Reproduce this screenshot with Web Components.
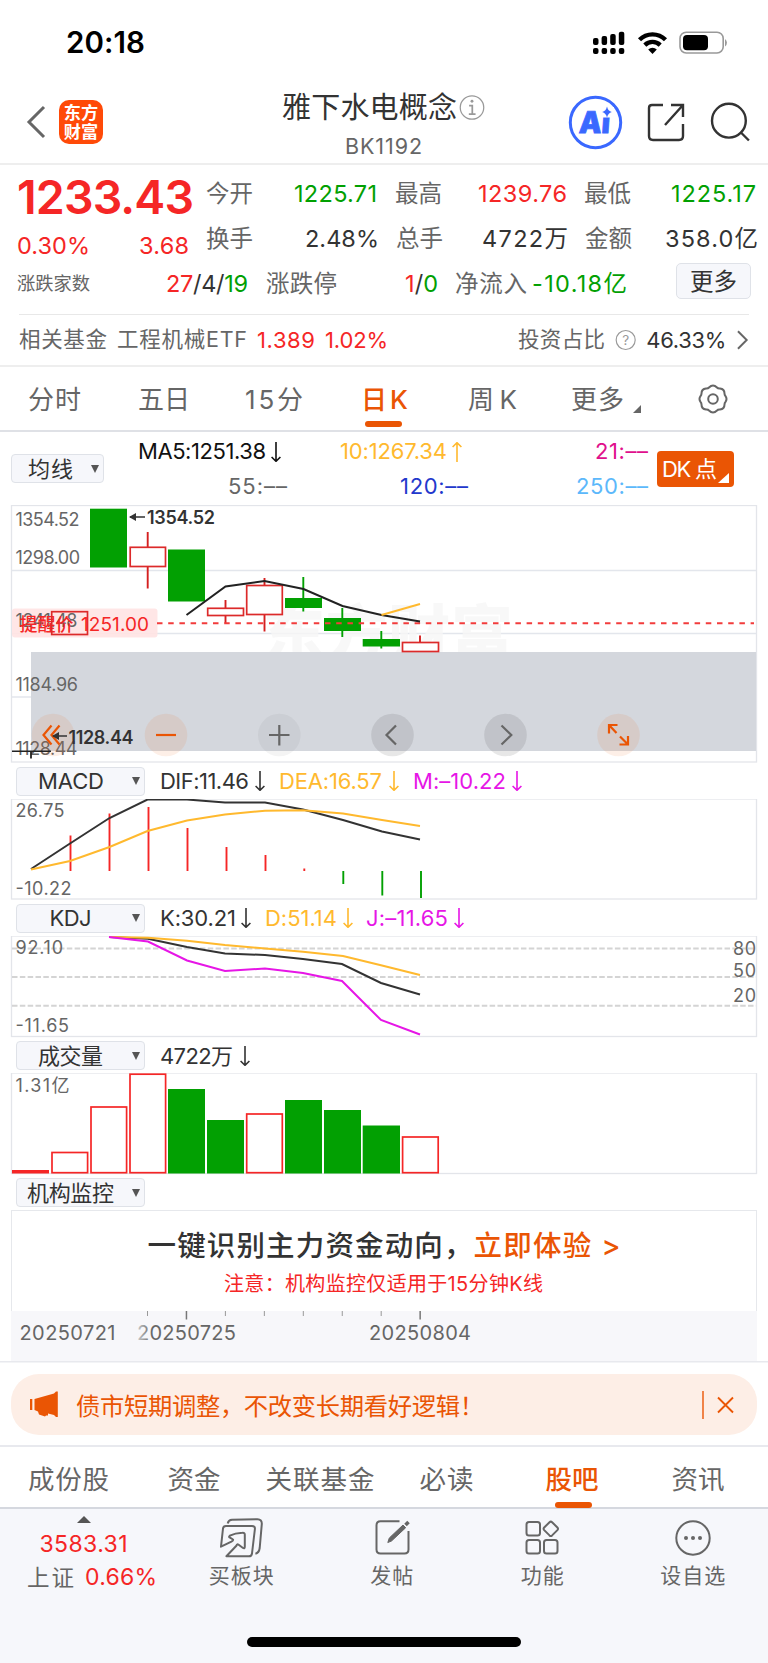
<!DOCTYPE html>
<html lang="zh-CN">
<head>
<meta charset="utf-8">
<title>雅下水电概念</title>
<style>
html,body{margin:0;padding:0;background:#fff}
body{width:768px;height:1663px;overflow:hidden;font-family:Inter,"Noto Sans CJK SC",sans-serif;color:#333}
</style>
</head>
<body>
<stock-page></stock-page>
<script>
const RED='#f52626', GREEN='#02a002', ORANGE='#ea5504', GRAY='#666', DARK='#333', YEL='#ffb92e', MAG='#e616e6';
const define=(name,html,extra)=>customElements.define(name,class extends HTMLElement{
  constructor(){super();this.attachShadow({mode:'open'}).innerHTML=typeof html==='function'?html(this):html;}
  connectedCallback(){if(extra)extra(this,this.shadowRoot);}
});

/* Text tracked to fill a given width. w: width, g: gap before, s: size, c: colour, b: weight */
define('fit-text','<style>:host{display:block;flex:none;white-space:nowrap;line-height:1.2}span{display:inline-block}</style><span><slot></slot></span>',(el,root)=>{
  const a=n=>el.getAttribute(n), w=parseFloat(a('w')), span=root.querySelector('span');
  if(a('s'))el.style.fontSize=a('s')+'px';
  if(a('c'))el.style.color=a('c');
  if(a('b'))el.style.fontWeight=a('b');
  if(a('g'))el.style.marginLeft=a('g')+'px';
  el.style.width=w+'px';
  const n=el.textContent.length, nat=span.getBoundingClientRect().width;
  const ls=n>1?(w-nat)/(n-1):0;
  span.style.letterSpacing=ls+'px';
  span.style.marginRight=-ls+'px';
});
const T=(t,x,g,s,c,b)=>`<fit-text w="${x}" g="${g}" s="${s}" c="${c||GRAY}"${b?` b="${b}"`:''}>${t}</fit-text>`;

/* Trend arrow */
define('trend-arrow',el=>`<style>:host{display:block;flex:none;width:10px;height:20px;margin-left:${el.getAttribute('g')}px;color:${el.getAttribute('c')}}svg{display:block;${el.hasAttribute('up')?'transform:rotate(180deg)':''}}</style>
<svg width="10" height="20" viewBox="0 0 10 20" fill="none" stroke="currentColor" stroke-width="1.6"><path d="M5 0v19.2M.6 15L5 19.3 9.4 15"/></svg>`);
const A=(g,c,up)=>`<trend-arrow g="${g}" c="${c}"${up?' up':''}></trend-arrow>`;

define('status-bar',`<style>:host{display:flex;height:80px;align-items:center;padding-top:5px;box-sizing:border-box;color:#000}svg{display:block;margin-left:447px;flex:none}</style>
${T('20:18',79,66,29.5,'#000',600)}
<svg width="138" height="24" viewBox="592 30 138 24">
<g fill="#000"><rect x="593" y="37" width="5.5" height="7" rx="2"/><rect x="601.6" y="35" width="5.5" height="9" rx="2"/><rect x="610.2" y="33" width="5.5" height="11" rx="2"/><rect x="618.8" y="30.7" width="5.5" height="13.3" rx="2"/>
<rect x="593" y="47" width="5.5" height="6" rx="2"/><rect x="601.6" y="47" width="5.5" height="6" rx="2"/><rect x="610.2" y="47" width="5.5" height="6" rx="2"/><rect x="618.8" y="47" width="5.5" height="6" rx="2"/></g>
<g fill="none" stroke="#000" stroke-width="4.3"><path d="M639.5 38.8a18.2 18.2 0 0 1 26 0M644.8 44.1a11 11 0 0 1 15.4 0"/></g><path d="M652.5 53l-4.3-4.6a6.2 6.2 0 0 1 8.6 0z"/>
<rect x="680" y="31.2" width="43.2" height="20.8" rx="6.2" fill="none" stroke="#999" stroke-width="1.6"/><rect x="683" y="34" width="25" height="15.3" rx="4"/><path d="M725 38a4.6 4.6 0 0 1 0 7.5z" fill="#999"/></svg>`);

define('page-header',`<style>:host{display:flex;height:85px;box-sizing:border-box;border-bottom:2px solid #eee;color:#333}
.l{width:282px;display:flex;flex:none;align-items:center;padding:1px 0 0;box-sizing:border-box}
.l svg{margin-left:26px;flex:none}.logo{margin-left:13px;width:44px;height:44px;border-radius:10px;background:#ff4a08;color:#fff;font:700 17.2px/19px "Noto Sans CJK SC",sans-serif;text-align:center;box-sizing:border-box;padding-top:2px}
.m{flex:none;width:203px}.t{display:flex;align-items:center;height:54px}.t svg{margin-left:2px}.t fit-text{padding-top:2px}.b{display:flex}
.r{flex:none}</style>
<div class="l"><svg width="20" height="34" viewBox="0 0 20 34" fill="none" stroke="#666" stroke-width="3"><path d="M18 2L3 17l15 15"/></svg><div class="logo">东方<br>财富</div></div>
<div class="m"><div class="t">${T('雅下水电概念',175,0,29,DARK)}<svg width="27" height="27" viewBox="0 0 27 27"><circle cx="13.5" cy="13.5" r="12.2" fill="none" stroke="#999" stroke-width="1.3"/><circle cx="13.5" cy="7" r="1.5" fill="#999"/><path d="M10.5 11.5h3.3v8.8M10.2 20.3h7" fill="none" stroke="#999" stroke-width="1.8"/></svg></div>
<div class="b">${T('BK1192',77,63,21.5,GRAY)}</div></div>
<svg class="r" width="283" height="83" viewBox="485 80 283 83" fill="none" stroke="#333" stroke-width="2.4">
<circle cx="595.5" cy="122.5" r="25.2" stroke="#3a68ff" stroke-width="3"/>
<g stroke="none" fill="#3a68ff"><text transform="translate(578.5 133) skewX(-4)" font-family="Inter,sans-serif" font-weight="900" font-size="30" stroke="#3a68ff" stroke-width=".8" textLength="31" lengthAdjust="spacingAndGlyphs">Ai</text><rect x="601" y="107" width="13" height="10.500" fill="#fff"/><path d="M607 106.500q1 4.500 4.800 5.500-3.800 1-4.800 5.500-1-4.500-4.800-5.500Q606 111 607 106.500z"/></g>
<path d="M663 105h-11q-3 0-3 3v28q0 4 4 4h26q4 0 4-4v-12M671 105h12v12M683 105l-18 20"/>
<circle cx="728.900" cy="120.700" r="16.900"/><path d="M740.900 132.500l8 8"/></svg>`);

define('quote-panel',`<style>:host{display:block;height:202px;box-sizing:border-box;border-bottom:2px solid #eee}
.top{display:flex;height:97px}.l{width:206px;flex:none}.row{display:flex;align-items:center}
.btn{width:75px;height:36px;box-sizing:border-box;border:1.5px solid #dfe2e8;border-radius:5px;background:#f6f7fb;margin-left:49px;display:flex;align-items:center;margin-top:-6px}.btn fit-text{padding-top:2px}
.fund{height:50px;border-top:1px solid #e8e8e8;margin:8px 19px 0;width:730px}</style>
<div class="top"><div class="l"><div class="row" style="height:65px">${T('1233.43',177,17,46.500,RED,600)}</div><div class="row" style="height:32px">${T('0.30%',73,17,23.500,RED)}${T('3.68',50,49,23.500,RED)}</div></div>
<div><div class="row" style="height:59px">${T('今开',47,0,23.500)}${T('1225.71',83,41,23.500,GREEN)}${T('最高',47,18,23.500)}${T('1239.76',89,36,23.500,RED)}${T('最低',47,17,23.500)}${T('1225.17',85,40,23.500,GREEN)}</div>
<div class="row" style="height:30px">${T('换手',47,0,23.500)}${T('2.48%',74,52,23.500,DARK)}${T('总手',47,17,23.500)}${T('4722万',86,39,23.500,DARK)}${T('金额',47,17,23.500)}${T('358.0亿',93,33,23.500,DARK)}</div></div></div>
<div class="row" style="height:44px">${T('涨跌家数',73,17,18.300)}<fit-text w="82" g="76" s="23.500" c="#333"><span style="color:${RED}">27</span>/4/<span style="color:${GREEN}">19</span></fit-text>${T('涨跌停',71,18,23.500)}<fit-text w="33" g="68" s="23.500" c="#333"><span style="color:${RED}">1</span>/<span style="color:${GREEN}">0</span></fit-text>${T('净流入',72,17,23.500)}${T('-10.18亿',95,5,23.500,GREEN)}<div class="btn">${T('更多',47,13,23.500,DARK)}</div></div>
<div class="row fund">${T('相关基金',88,0,21.500)}${T('工程机械ETF',130,10,21.500)}${T('1.389',58,10,22,RED)}${T('1.02%',63,10,22,RED)}${T('投资占比',87,130,21.500)}<svg style="margin-left:10px" width="22" height="22" viewBox="0 0 22 22"><circle cx="11" cy="11" r="9.800" fill="none" stroke="#999" stroke-width="1.200"/><text x="11" y="16" font-family="Inter" font-size="14" text-anchor="middle" fill="#999">?</text></svg>${T('46.33%',80,10,22,DARK)}<svg style="margin-left:11px" width="12" height="20" viewBox="0 0 12 20" fill="none" stroke="#666" stroke-width="2"><path d="M1 1l9 9-9 9"/></svg></div>`);

define('period-tabs',`<style>:host{display:flex;height:65px;box-sizing:border-box;border-bottom:2px solid #dfe1e6;align-items:center;position:relative}
fit-text{padding-top:2px}
i{position:absolute;left:365px;top:54px;width:37px;height:6px;border-radius:3px;background:${ORANGE}}
.tri{border-left:8px solid transparent;border-bottom:8px solid #666;margin:21px 0 0 9px}.g{margin-left:57px}</style>
${T('分时',53,28,26)}${T('五日',52,57,26)}${T('15分',58,55,26)}${T('日K',47,58,26,ORANGE,500)}${T('周K',49,60,26)}${T('更多',53,54,26)}<span class="tri"></span>
<svg class="g" width="30" height="30" viewBox="0 0 30 30" fill="none" stroke="#666" stroke-width="2"><path d="M11 3.500Q15-.500 19 3.500q1 1.200 3 1 4.500.5 4.500 5 0 1.500 1 2.700 2 2.800 0 5.600-1 1.200-1 2.700 0 4.500-4.500 5-2-.200-3 1-4 4-8 0-1-1.200-3-1-4.500-.5-4.500-5 0-1.500-1-2.700-2-2.800 0-5.600 1-1.200 1-2.700 0-4.500 4.500-5 2 .2 3-1z"/><circle cx="15" cy="15" r="4.800"/></svg><i></i>`);

/* Dropdown button naming an indicator */
define('pick-button',el=>`<style>:host{display:flex;flex:none;align-items:center;height:29px;box-sizing:border-box;border:1.500px solid #dfe2e8;border-radius:4px;background:#f6f7fb;width:${el.getAttribute('w')}px;color:#333;position:relative}
b{position:absolute;right:4.500px;top:9.500px;border:4.500px solid transparent;border-top:8.500px solid #555;border-bottom:0}</style><slot></slot><b></b>`);

define('ma-legend',`<style>:host{display:flex;height:73px;align-items:center}
.c{width:553px;height:73px;flex:none}.row{display:flex;align-items:center;height:35px}
.dk{position:relative;width:77px;height:36px;border-radius:4px;background:${ORANGE};display:flex;align-items:center;flex:none}
.dk fit-text{padding-top:1px}
.dk i{position:absolute;right:5px;bottom:4px;border-left:11px solid transparent;border-bottom:10px solid #fff}
pick-button{margin-left:11px}pick-button fit-text{padding-top:2px}</style>
<pick-button w="93">${T('均线',45,16,22,DARK)}</pick-button>
<div class="c"><div class="row" style="padding-top:2px">${T('MA5:1251.38',128,34,22,'#111')}${A(5,'#111')}${T('10:1267.34',107,59,22,YEL)}${A(5,YEL,1)}${T('21:––',53,133,22,'#e0108c')}</div>
<div class="row">${T('55:––',59,124,22)}${T('120:––',68,113,22,'#2238cc')}${T('250:––',72,108,22,'#5cb8fb')}</div></div>
<div class="dk">${T('DK 点',55,5,22,'#fff')}<i></i></div>`);

/* ---- charts, drawn in page coordinates ---- */
const txt=(t,x,y,w,s=18,c=GRAY,b=400)=>`<text x="${x}" y="${y}" font-size="${s}" fill="${c}" font-weight="${b}" textLength="${w}">${t}</text>`;
const line=(p,c,w=2)=>`<polyline points="${p}" fill="none" stroke="${c}" stroke-width="${w}"/>`;
const seg=(x1,y1,x2,y2,c,w=1.500,d)=>`<line x1="${x1}" y1="${y1}" x2="${x2}" y2="${y2}" stroke="${c}" stroke-width="${w}"${d?` stroke-dasharray="${d}"`:''}/>`;
const wick=(x,y1,y2,c='#d42020')=>seg(x,y1,x,y2,c,1.900);
const solid=(x1,y1,x2,y2,c=GREEN)=>`<rect x="${x1}" y="${y1}" width="${x2-x1}" height="${y2-y1}" fill="${c}"/>`;
const hollow=(x1,y1,x2,y2,c='#dc2a2a',f='#fff')=>`<rect x="${x1}" y="${y1}" width="${x2-x1}" height="${y2-y1}" fill="${f}" stroke="${c}" stroke-width="1.700"/>`;
const frame=(y1,y2)=>`<rect x="11.500" y="${y1}" width="745" height="${y2-y1}" fill="#fff" stroke="#e3e5ea" stroke-width="1.300"/>`;
const svg=(y1,y2,body)=>`<style>:host{display:block;height:${y2-y1}px}svg{display:block;font-family:Inter,"Noto Sans CJK SC",sans-serif}</style><svg width="768" height="${y2-y1}" viewBox="0 ${y1} 768 ${y2-y1}">${body}</svg>`;

const knob=(x,f,d,c)=>`<circle cx="${x}" cy="735" r="21.300" fill="${f}"/><path d="${d}" fill="none" stroke="${c}" stroke-width="2.200"/>`;
const OR='rgba(234,110,40,.11)', G1='rgba(60,60,60,.06)', G2='rgba(60,60,60,.12)';
define('candle-chart',svg(505,763,frame(505.500,762)
+seg(12,570.500,756,570.500,'#e3e6ec')+seg(12,633.500,756,633.500,'#e3e6ec')+seg(12,697,756,697,'#e3e6ec')
+`<text x="263" y="657" font-size="62" font-weight="900" fill="#f6f6f6" fill-opacity=".8" textLength="250">东方财富</text>`
+`<rect x="12" y="608.500" width="145.500" height="29" rx="3" fill="#ffe3e3" fill-opacity=".9"/>`
+solid(90,508.700,127,567.500)+wick(147.700,532,588.500)+hollow(130.200,547.300,165.500,566.500)+solid(168,549.500,205,601.500)
+wick(225.500,600,623)+hollow(207.700,608.300,243.500,615.500)+wick(264.500,578,631.500)+hollow(246.700,585.500,282.300,614.500)
+wick(303.300,577,611.500,GREEN)+solid(285,598,322,608)+wick(342.300,608,637,GREEN)+solid(324,618,361,631)
+wick(381.300,631,648.500,GREEN)+solid(362.700,639,400,646.500)
+seg(157,623.200,754,623.200,'#f23c3c',2,'5.500 5.700')
+solid(31,652,756,751,'#d4d7dd')
+wick(420,635.500,642)+hollow(402.500,642.500,438.500,651.500)
+line('186.500,615 225.500,586.500 264.500,581 303.500,589 342.500,606 381.500,615 420,621.500','#222')+line('381.500,615 420,604',YEL)
+txt('1354.52',15.500,525.500,64)+txt('1298.00',15.500,564,64.500)+txt('1241.48',15.500,627,62)+txt('1184.96',15.500,691,62.500)+txt('1128.44',15.500,755,62)
+txt('提醒价',19.500,631,54,18,RED,500)+hollow(51.700,611.700,87.500,634.500,'#dc2a2a','none')+txt('1251.00',81,630.500,68,19,RED)
+knob(53,OR,'M51.500 725.500L43.500 735l8 9.500M59.500 725.500l-8 9.500 8 9.500',ORANGE)
+knob(166,OR,'M156 735h20',ORANGE)+knob(279.300,G1,'M269 735h20.500M279.300 725v20.500',GRAY)
+knob(392.500,G2,'M396 725.500l-9.500 9.500 9.500 9.500',GRAY)+knob(505.500,G2,'M501.500 725.500l9.800 9.500-9.800 9.500',GRAY)
+knob(618.500,OR,'M617.500 725h-8.500v8.500M609 725l7.500 8M619.500 744.500h8.500v-8.500M628 744.500l-8-8',ORANGE)
+seg(12,751.300,51,751.300,'#222')+seg(31,751,31,758.500,'#222',1.800)
+`<path d="M145 517h-15M67 736H53" stroke="#333" stroke-width="1.700" fill="none"/><path d="M129 517l7-4v8zM52 736l7-4v8z" fill="#333"/>`
+txt('1354.52',147,524,68,18,DARK,600)+txt('1128.44',68.500,743.500,65,18,DARK,600)));

const bar=(x,y1,y2,c=RED)=>seg(x,y1,x,y2,c,1.900);
define('macd-chart',svg(799,900,frame(799,899)
+txt('26.75',15.500,817,49)+txt('-10.22',15.500,895,56)
+bar(70.500,835.500,871)+bar(109.500,813.500,871)+bar(148.500,807,871)+bar(187.500,828,871)+bar(226.500,847,871)+bar(265.500,855,871)+bar(304.300,868.500,871)
+bar(343.300,871,884,GREEN)+bar(382.300,871,895.500,GREEN)+bar(421,871,898,GREEN)
+line('31,869 70,843.500 109.500,818 147.500,799.500 187,799.500 225,802.500 265,802.500 303,809.500 343,820 382,831.500 420,839.500',DARK)
+line('31,869.500 70,861 109.500,847 147.500,831 187,820.500 225,814.500 265,810.700 303,810.200 343,813.500 382,820 420,826',YEL)));

const dash=y=>seg(12,y,756,y,'#d4d4d4',1.900,'5.500 2.330');
define('kdj-chart',svg(936,1038,frame(936,1036.500)+dash(948.500)+dash(977)+dash(1005.700)
+txt('92.10',15.500,954,47.500)+txt('-11.65',15.500,1032,53.500)+txt('80',733,954.500,23)+txt('50',733,976.500,23)+txt('20',733,1001.500,23)
+line('109,937 148,938.700 187,947 225,953.500 265,955 303,959 342,964 381,983 420,994.500',DARK)
+line('109,937 148,937.700 187,940.700 225,945 265,948.500 303,951.700 343,956 382,965.500 420,975',YEL)
+line('109,937 148,941.500 187,960.500 225,971 265,968.500 303,973 342,981 381,1020 420,1034.500',MAG)));

const vh=(x,y)=>hollow(x,y,x+35.600,1172.700,RED);
define('volume-chart',svg(1073,1175,frame(1073,1173.500)+txt('1.31亿',15.500,1092,54)
+solid(12,1170,49,1173.500,RED)+vh(52,1152.500)+vh(91,1107)+vh(130,1074.200)+solid(168,1089,205,1173.500)+solid(207,1120,244,1173.500)+vh(246.700,1114)
+solid(285,1100,322,1173.500)+solid(324,1110,361,1173.500)+solid(362.700,1125.500,400,1173.500)+vh(402.600,1137)));

let ticks='';for(let i=0;i<8;i++){const x=147.500+i*38.950,t=i===1||i===7;ticks+=seg(x,1311,x,t?1319.500:1316,t?'#777':'#999',t?1.500:1);}
define('time-axis',svg(1311,1363,`<rect x="11" y="1311" width="746" height="50" fill="#f7f7fa"/>${seg(0,1361.700,768,1361.700,'#e8e9ee')}${ticks}<defs><linearGradient id="f" gradientUnits="userSpaceOnUse" x1="137" y1="0" x2="152" y2="0"><stop offset="0" stop-color="#ccc"/><stop offset="1" stop-color="#666"/></linearGradient></defs>`
+txt('20250721',19.500,1340,96,20)+txt('20250725',137,1340,99,20,'url(#f)')+txt('20250804',369,1340,102,20)));

define('indicator-row',el=>`<style>:host{display:flex;align-items:center;height:${el.getAttribute('h')}px}pick-button{margin-left:16px}::slotted(fit-text){padding-top:1px}</style><pick-button w="129"><slot name="name"></slot></pick-button><slot></slot>`);
const IR=(h,name,x,w,rest='')=>`<indicator-row h="${h}"><fit-text slot="name" s="22" w="${w}" g="${x-17}" c="#333">${name}</fit-text>${rest}</indicator-row>`;

define('monitor-promo',`<style>:host{display:block;height:101px;box-sizing:border-box;margin:0 11px;border:1.500px solid #e6e8ec;border-bottom:0}.row{display:flex;align-items:center}</style>
<div class="row" style="height:70px">${T('一键识别主力资金动向，',325,135.500,28.500,DARK,500)}${T('立即体验 &gt;',147,1,28.500,ORANGE,500)}</div>
<div class="row" style="height:6px">${T('注意：机构监控仅适用于15分钟K线',319,212,20,RED)}</div>`);

define('notice-bar',`<style>:host{display:flex;height:84px;box-sizing:border-box;border-bottom:2px solid #e8e9ee;padding:11px 11px 10px}
div{width:746px;border-radius:28px;background:#fdeee6;display:flex;align-items:center}svg{display:block;flex:none}fit-text{padding-top:4px}</style>
<div><svg style="margin-left:19px" width="29" height="27" viewBox="0 0 29 27" fill="${ORANGE}"><path d="M0 8h2.300v11H0zM4.500 8L24 2.500 26 .5h1.800v25.500H26l-2-2-6-1.500v2h-2l-1 1-6-2-1-3-3.500-1.500z"/></svg>
${T('债市短期调整，不改变长期看好逻辑！',408,17,24.300,ORANGE)}
<svg style="margin-left:218px" width="32" height="30" viewBox="0 0 32 30" fill="none" stroke="${ORANGE}"><path d="M1 1v28" stroke-width="1.400"/><path d="M16 7.500l15 15M31 7.500l-15 15" stroke-width="1.900"/></svg></div>`);

define('section-tabs',`<style>:host{display:flex;height:62px;box-sizing:border-box;border-bottom:2px solid #d5d8df;align-items:center;position:relative}fit-text{padding-top:5px}i{position:absolute;left:555px;top:55px;width:37px;height:5.500px;border-radius:3px;background:${ORANGE}}</style>
${T('成份股',81,28,26.500)}${T('资金',53,58.500,26.500)}${T('关联基金',109,45,26.500)}${T('必读',54,45,26.500)}${T('股吧',53,72,26.500,ORANGE,500)}${T('资讯',53,73,26.500)}<i></i>`);

define('tool-item',el=>`<style>:host{display:flex;flex-direction:column;align-items:center;width:150.500px;flex:none}svg{display:block;fill:none;stroke:#666;stroke-width:2;height:42px;width:46px;margin-top:8px}::slotted(fit-text){padding-top:4px}</style>
<svg viewBox="0 0 46 42">${ICONS[el.getAttribute('icon')]}</svg><slot></slot>`);
const ICONS={
buy:'<path d="M9.700 6.500Q10.500 3 14 2.800L39.500 2.300Q44 2.300 43.800 7L41.700 31Q41 36 37.400 36.700"/><path d="M3 29.700L5 11.500Q5.300 9 8 9H34Q37.200 9 36.900 12L34 36.500Q33.600 39.300 31 39.300H8.400L18.600 28.500Q18.600 26.500 21 28L25 31Q26.800 32 26.800 29.500V18Q27 15.500 24.400 15.700Q17 16 11.800 18.700Q10.300 20 12 20.700L15 22.500Q15.500 23.500 13.400 24.700z" stroke-linejoin="round"/>',
post:'<path d="M30.500 4.300H11.500q-4 0-4 4v24.200q0 4 4 4h24q4 0 4-4V14"/><path d="M18.800 25.500l1.500-4.500L34 8l2.700 2.700L22.500 24z" fill="#666" stroke-width="1"/><path d="M36.500 8l3-3" stroke-width="3.500"/>',
grid:'<rect x="7.500" y="5" width="13.500" height="13.500" rx="2.500"/><rect x="7.500" y="23" width="13.500" height="13.500" rx="2.500"/><rect x="25" y="23" width="13.500" height="13.500" rx="2.500"/><path d="M30.500 5.200q1.300-1.200 2.600 0l5.300 5.300q1.200 1.300 0 2.600l-5.300 5.300q-1.300 1.200-2.600 0l-5.300-5.300q-1.200-1.300 0-2.600z"/>',
more:'<circle cx="23" cy="21" r="16.700"/><g fill="#666" stroke="none"><circle cx="16" cy="21" r="2"/><circle cx="23" cy="21" r="2"/><circle cx="30" cy="21" r="2"/></g>'};

define('bottom-bar',`<style>:host{display:block;height:154px;background:#f6f7fb}.top{display:flex;height:128px}
.q{width:166px;flex:none}.up{border:7px solid transparent;border-bottom:7px solid #555;border-top:0;width:0;margin:7px 0 0 77px}.row{display:flex;align-items:center}
.home{width:274px;height:10px;border-radius:5px;background:#000;margin-left:247px}</style>
<div class="top"><div class="q"><div class="up"></div><div class="row" style="height:43px">${T('3583.31',88,39.500,23,RED)}</div><div class="row" style="height:23px">${T('上证',47,27,22.500)}${T('0.66%',72,11,23,RED)}</div></div>
<tool-item icon="buy">${T('买板块',65,0,21)}</tool-item><tool-item icon="post">${T('发帖',43,0,21)}</tool-item><tool-item icon="grid">${T('功能',43,0,21)}</tool-item><tool-item icon="more">${T('设自选',65,0,21)}</tool-item></div><div class="home"></div>`);

define('stock-page',`<style>:host{display:flex;flex-direction:column;width:768px;height:1663px;background:#fff}:host>*{flex:none}</style>
<status-bar></status-bar><page-header></page-header><quote-panel></quote-panel><period-tabs></period-tabs><ma-legend></ma-legend>
<candle-chart></candle-chart>
${IR(36,'MACD',38,66,T('DIF:11.46',89,15,22,DARK)+A(6,DARK)+T('DEA:16.57',103,14,22,YEL)+A(7,YEL)+T('M:–10.22',93,14,22,MAG)+A(6,MAG))}
<macd-chart></macd-chart>
${IR(36,'KDJ',49.500,42,T('K:30.21',76,15,22,DARK)+A(5,DARK)+T('D:51.14',72,14,22,YEL)+A(6,YEL)+T('J:–11.65',82,13,22,MAG)+A(6,MAG))}
<kdj-chart></kdj-chart>
${IR(35,'成交量',38,65,T('4722万',73,15,22,DARK)+A(7,DARK))}
<volume-chart></volume-chart>
${IR(35,'机构监控',27,87)}
<monitor-promo></monitor-promo><time-axis></time-axis><notice-bar></notice-bar><section-tabs></section-tabs><bottom-bar></bottom-bar>`);
</script>
</body>
</html>
